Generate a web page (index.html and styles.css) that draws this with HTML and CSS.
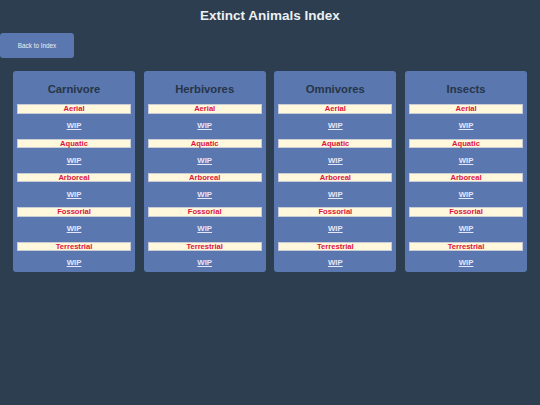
FILE: index.html
```html
<!DOCTYPE html>
<html>
<head>
    <title>Extinct Animals Index</title>
    <link rel="stylesheet" href="styles.css">
</head>
<body>
<h1>Extinct Animals Index</h1>
<a class="back-button" href="#">Back to Index</a>
<div class="card-row">
    <div class="card">
        <h2>Carnivore</h2>
        <div class="category">Aerial</div>
        <a class="wip" href="#">WIP</a>
        <div class="category">Aquatic</div>
        <a class="wip" href="#">WIP</a>
        <div class="category">Arboreal</div>
        <a class="wip" href="#">WIP</a>
        <div class="category">Fossorial</div>
        <a class="wip" href="#">WIP</a>
        <div class="category">Terrestrial</div>
        <a class="wip" href="#">WIP</a>
    </div>
    <div class="card">
        <h2>Herbivores</h2>
        <div class="category">Aerial</div>
        <a class="wip" href="#">WIP</a>
        <div class="category">Aquatic</div>
        <a class="wip" href="#">WIP</a>
        <div class="category">Arboreal</div>
        <a class="wip" href="#">WIP</a>
        <div class="category">Fossorial</div>
        <a class="wip" href="#">WIP</a>
        <div class="category">Terrestrial</div>
        <a class="wip" href="#">WIP</a>
    </div>
    <div class="card">
        <h2>Omnivores</h2>
        <div class="category">Aerial</div>
        <a class="wip" href="#">WIP</a>
        <div class="category">Aquatic</div>
        <a class="wip" href="#">WIP</a>
        <div class="category">Arboreal</div>
        <a class="wip" href="#">WIP</a>
        <div class="category">Fossorial</div>
        <a class="wip" href="#">WIP</a>
        <div class="category">Terrestrial</div>
        <a class="wip" href="#">WIP</a>
    </div>
    <div class="card">
        <h2>Insects</h2>
        <div class="category">Aerial</div>
        <a class="wip" href="#">WIP</a>
        <div class="category">Aquatic</div>
        <a class="wip" href="#">WIP</a>
        <div class="category">Arboreal</div>
        <a class="wip" href="#">WIP</a>
        <div class="category">Fossorial</div>
        <a class="wip" href="#">WIP</a>
        <div class="category">Terrestrial</div>
        <a class="wip" href="#">WIP</a>
    </div>
</div>
</body>
</html>
```

FILE: styles.css
```css
body {
    font-family: "Liberation Sans", Arial, sans-serif;
    margin: 0;
    background-color: #2c3e50;
}

h1 {
    color: #ecf0f1;
    text-align: center;
    font-size: 13.5px;
    line-height: 16px;
    margin: 0;
    padding-top: 8px;
}

.back-button {
    display: flex;
    align-items: center;
    justify-content: center;
    width: 74px;
    height: 25px;
    margin-top: 9px;
    background-color: #5a77b0;
    color: #ecf0f1;
    font-size: 6.35px;
    text-decoration: none;
    border-radius: 3px;
}

.card-row {
    display: flex;
    gap: 8.67px;
    padding: 13px;
}

.card {
    flex: 1;
    display: flex;
    flex-direction: column;
    gap: 8.4px;
    padding: 11px 4px 5px;
    background-color: #5a77b0;
    border-radius: 3px;
}

.card h2 {
    margin: 0;
    color: #263548;
    text-align: center;
    font-size: 11.3px;
    line-height: 14px;
}

.category {
    background-color: #fff8dc;
    color: #dc143c;
    border: 1px solid #c9ccd4;
    font-size: 7.6px;
    font-weight: bold;
    line-height: 7.5px;
    text-align: center;
}

.wip {
    color: #e6e6fa;
    font-size: 7.8px;
    font-weight: bold;
    line-height: 8px;
    text-align: center;
}
```
